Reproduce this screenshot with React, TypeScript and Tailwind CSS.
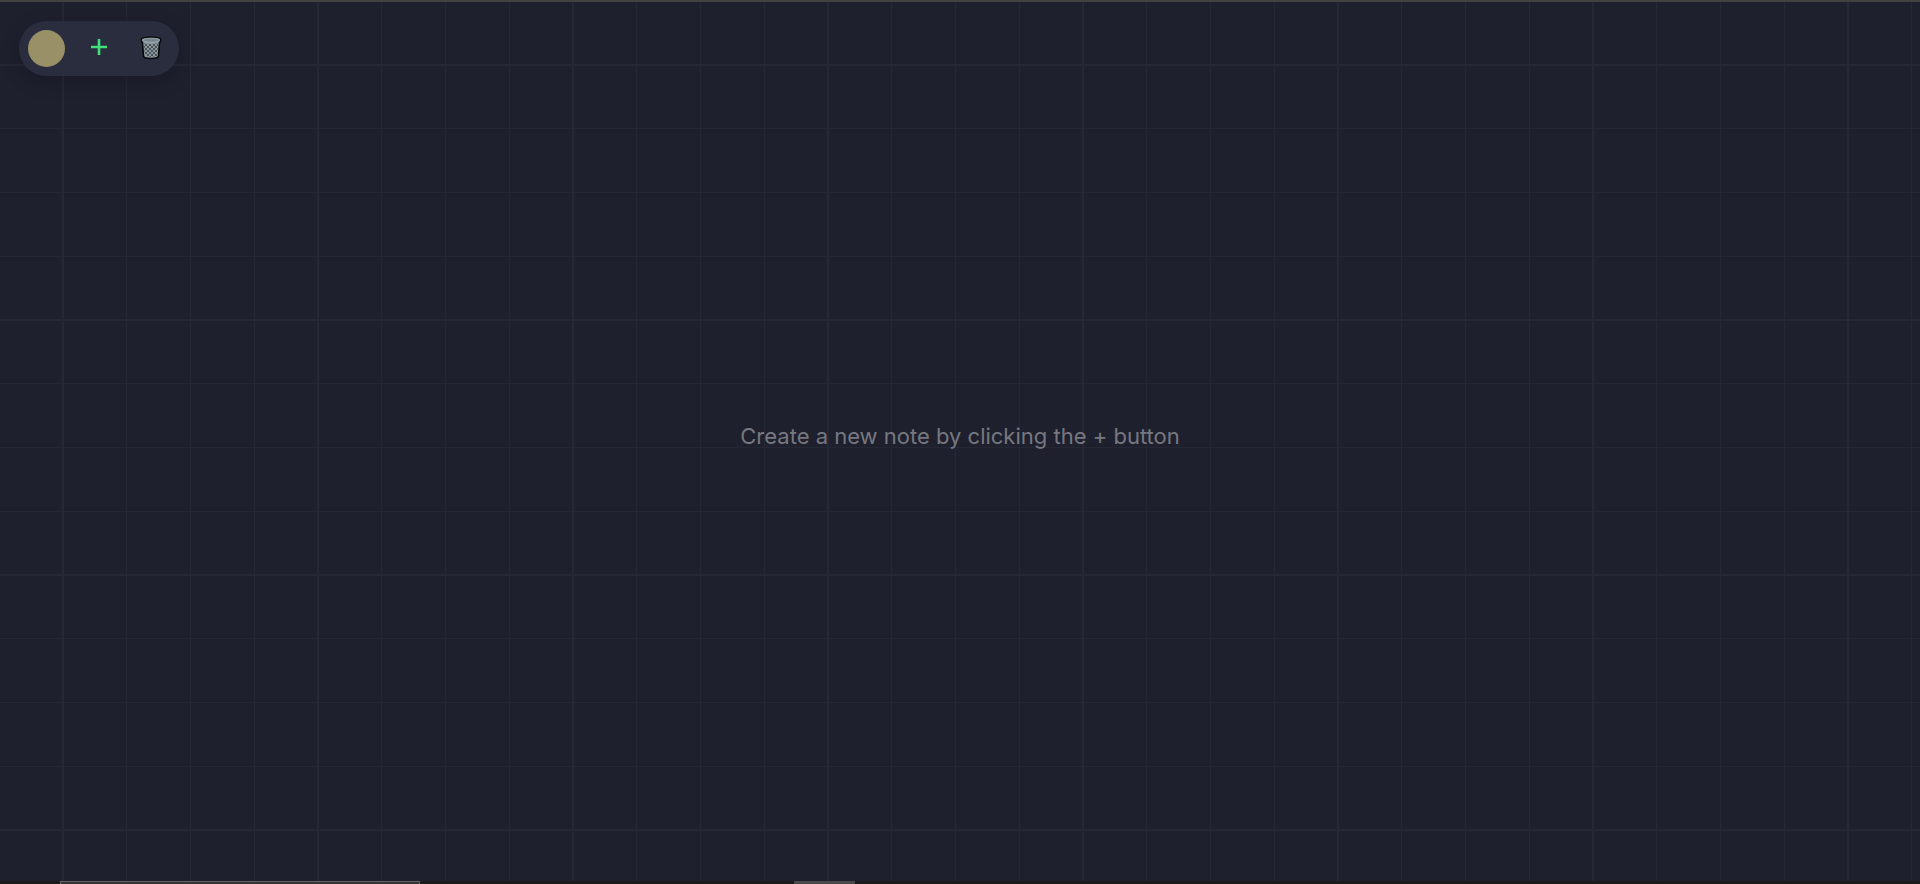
import { useState } from "react";

type Note = { id: number; color: string };

function TrashIcon() {
  return (
    <svg viewBox="0 0 22 24" className="h-6 w-[22px]" aria-hidden="true">
      <defs>
        <pattern id="mesh" x="1" width="4" height="4" patternUnits="userSpaceOnUse">
          <rect width="4" height="4" fill="#8b979d" />
          <rect width="2" height="2" fill="#48535a" />
          <rect x="2" y="2" width="2" height="2" fill="#48535a" />
        </pattern>
      </defs>
      <path
        d="M1.2 3.6C1.2 1.9 5 1.3 11 1.3S20.8 1.9 20.8 3.6C20.8 5.2 20.5 6.2 19.5 6.6L18.5 20.2C18.3 22 15 22.5 11 22.5S3.7 22 3.500 20.200L2.500 6.600C1.500 6.200 1.200 5.200 1.200 3.600Z"
        fill="#8b979d"
        stroke="#050608"
        strokeWidth="1.6"
      />
      <path d="M3.8 7.2Q11 8.6 18.2 7.2L17.2 19.8Q11 21.6 4.8 19.8Z" fill="url(#mesh)" />
      <ellipse cx="11" cy="4.2" rx="8.6" ry="2" fill="#77848b" stroke="#9caab0" strokeWidth="0.9" />
    </svg>
  );
}

export default function App() {
  const [color, setColor] = useState("#9a9068");
  const [notes, setNotes] = useState<Note[]>([]);

  return (
    <div className="flex h-screen flex-col overflow-hidden bg-[#1e202e] font-['Inter','Noto_Sans',sans-serif]">
      <div className="h-[2px] shrink-0 bg-[#41413f]" />
      <main className="relative flex flex-1 flex-col bg-[linear-gradient(90deg,#262836_2px,transparent_2px_64px,#252735_64px_65px,transparent_65px_128px,#252735_128px_129px,transparent_129px_192px,#252735_192px_193px,transparent_193px),linear-gradient(180deg,#262836_2px,transparent_2px_64px,#252735_64px_65px,transparent_65px_128px,#252735_128px_129px,transparent_129px_192px,#252735_192px_193px,transparent_193px)] bg-[length:255px_255px] bg-[position:62px_62px]">
        <div className="absolute left-[19px] top-[19px] flex h-[55px] items-center gap-4 rounded-full bg-[#2a2d3e] pl-[9px] pr-[10px] shadow-[0_5px_20px_rgba(0,0,0,0.2)]">
          <input
            type="color"
            aria-label="Note color"
            value={color}
            onChange={(e) => setColor(e.target.value)}
            className="size-[37px] cursor-pointer appearance-none overflow-hidden rounded-full border-0 bg-transparent p-0 [&::-webkit-color-swatch-wrapper]:p-0 [&::-webkit-color-swatch]:border-0"
          />
          <button
            type="button"
            aria-label="Add note"
            onClick={() => setNotes([...notes, { id: notes.length, color }])}
            className="flex size-9 items-center justify-center pb-1 text-[#40df7c]"
          >
            <svg viewBox="0 0 16 16" className="size-4" aria-hidden="true">
              <path d="M8 0V16M0 8H16" stroke="currentColor" strokeWidth="2.6" />
            </svg>
          </button>
          <button
            type="button"
            aria-label="Delete all notes"
            onClick={() => setNotes([])}
            className="flex size-9 items-center justify-center pb-0.5"
          >
            <TrashIcon />
          </button>
        </div>
        <div className="flex flex-1 flex-wrap items-center justify-center gap-6 pb-3">
          {notes.length === 0 ? (
            <p className="text-[22px] leading-8 text-[#777880]">Create a new note by clicking the + button</p>
          ) : (
            notes.map((note) => (
              <textarea
                key={note.id}
                aria-label={`Note ${note.id + 1}`}
                className="size-52 resize-none rounded-lg p-4 text-gray-900"
                style={{ backgroundColor: note.color }}
              />
            ))
          )}
        </div>
      </main>
      <footer className="flex h-[3px] shrink-0 bg-[#1b1a1d]">
        <div className="ml-[60px] w-[360px] border-x border-t border-[#626262] bg-[#353535]" />
        <div className="ml-[374px] w-[61px] bg-[#4b4a4b]" />
      </footer>
    </div>
  );
}
